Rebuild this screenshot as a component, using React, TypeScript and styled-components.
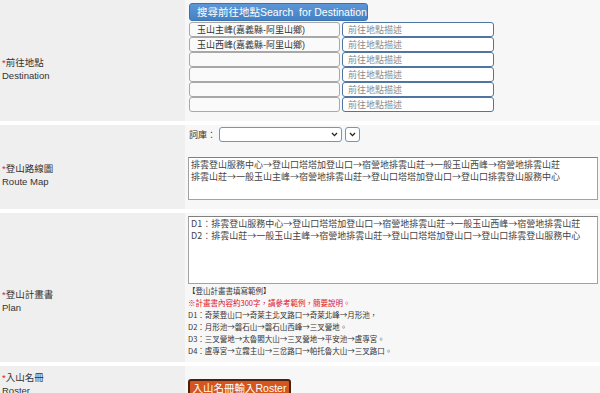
import React from 'react';
import styled, { createGlobalStyle } from 'styled-components';

const Global = createGlobalStyle`
  html, body { margin: 0; padding: 0; overflow: hidden; background: #fff; }
  body { font-family: "Liberation Sans", "Noto Sans CJK TC", sans-serif; color: #333; }
  * { box-sizing: border-box; }
`;

const Form = styled.div`
  display: flex;
  flex-direction: column;
  gap: 4px;
  width: 600px;
`;

const Row = styled.div`
  display: grid;
  grid-template-columns: 185px 1fr;
`;

const LabelCell = styled.div<{ $top?: boolean; $pt?: number }>`
  background: #efefef;
  display: flex;
  flex-direction: column;
  justify-content: ${(p) => (p.$top ? 'flex-start' : 'center')};
  padding: ${(p) => p.$pt ?? 16}px 0 0 2px;
  font-size: 9.5px;
  line-height: 13px;
  color: #333;
`;

const Req = styled.span`
  color: #e02424;
`;

const FieldCell = styled.div<{ $pt: number; $pb: number }>`
  background: #f7f7f7;
  padding: ${(p) => p.$pt}px 2px ${(p) => p.$pb}px 3px;
  display: flex;
  flex-direction: column;
  align-items: flex-start;
`;

const SearchButton = styled.button`
  margin-left: 1px;
  width: 179px;
  height: 18px;
  padding: 0 0 0 7px;
  text-align: left;
  background: linear-gradient(#5c96d6, #4482c5);
  border: 1px solid #3b71ae;
  border-radius: 3px;
  color: #fff;
  font-family: inherit;
  font-size: 10.5px;
  line-height: 16px;
  white-space: nowrap;
`;

const DestGrid = styled.div`
  margin: 1px 0 0 1px;
  display: grid;
  grid-template-columns: 151px 152px;
  column-gap: 2px;
`;

const NameInput = styled.input`
  height: 15px;
  width: 100%;
  border: 1px solid #a8a8a8;
  border-radius: 3px;
  background: #fafafa;
  padding: 0 0 0 7px;
  font-family: inherit;
  font-size: 9px;
  color: #333;
  outline: none;
`;

const DescInput = styled.input`
  height: 15px;
  width: 100%;
  border: 1px solid #4f76a3;
  border-radius: 3px;
  background: #fff;
  padding: 0 0 0 5px;
  font-family: inherit;
  font-size: 9px;
  color: #333;
  outline: none;
  &::placeholder { color: #8a8a8a; }
`;

const ThesaurusLine = styled.div`
  margin-left: 1px;
  display: flex;
  align-items: center;
  gap: 3px;
  font-size: 9px;
  color: #333;
`;

const SelectBox = styled.div<{ $w: number }>`
  width: ${(p) => p.$w}px;
  height: 15px;
  border: 1px solid #6f96c2;
  border-radius: 3px;
  background: #fff;
  display: flex;
  align-items: center;
  justify-content: flex-end;
  padding-right: 3px;
`;

const Chevron = () => (
  <svg width="7" height="5" viewBox="0 0 7 5">
    <path d="M1 1 L3.5 3.6 L6 1" fill="none" stroke="#222" strokeWidth="1.3" />
  </svg>
);

const Area = styled.textarea<{ $h: number; $mt: number }>`
  margin-top: ${(p) => p.$mt}px;
  width: 100%;
  height: ${(p) => p.$h}px;
  resize: none;
  border: 1px solid #a2a2a2;
  border-top-color: #808080;
  background: #fff;
  padding: 1px 2px;
  font-family: "Noto Sans CJK TC", "Liberation Sans", sans-serif;
  font-size: 9px;
  line-height: 11.5px;
  color: #444;
  overflow: hidden;
  outline: none;
`;

const Note = styled.div`
  margin-top: 1px;
  font-family: "Noto Sans CJK TC", "Liberation Sans", sans-serif;
  font-size: 7.5px;
  line-height: 12px;
  color: #333;
`;

const NoteLine = styled.div<{ $red?: boolean }>`
  color: ${(p) => (p.$red ? '#e0121e' : '#333')};
  white-space: nowrap;
`;

const RosterButton = styled.button`
  margin-top: 13px;
  width: 103px;
  height: 19px;
  padding: 0;
  background: #d2561d;
  border: 2px solid #4a2010;
  border-radius: 3px;
  color: #fff;
  font-family: inherit;
  font-size: 10.5px;
  line-height: 15px;
  white-space: nowrap;
`;

const destinations = ['玉山主峰(嘉義縣-阿里山鄉)', '玉山西峰(嘉義縣-阿里山鄉)', '', '', '', ''];

const routeText =
  '排雲登山服務中心→登山口塔塔加登山口→宿營地排雲山莊→一般玉山西峰→宿營地排雲山莊\n排雲山莊→一般玉山主峰→宿營地排雲山莊→登山口塔塔加登山口→登山口排雲登山服務中心';

const planText =
  'D1：排雲登山服務中心→登山口塔塔加登山口→宿營地排雲山莊→一般玉山西峰→宿營地排雲山莊\nD2：排雲山莊→一般玉山主峰→宿營地排雲山莊→登山口塔塔加登山口→登山口排雲登山服務中心';

const noteLines = [
  { t: '【登山計畫書填寫範例】' },
  { t: '※計畫書內容約300字，請參考範例，簡要說明。', red: true },
  { t: 'D1：奇萊登山口→奇萊主北叉路口→奇萊北峰→月形池，' },
  { t: 'D2：月形池→磐石山→磐石山西峰→三叉營地。' },
  { t: 'D3：三叉營地→太魯閣大山→三叉營地→平安池→盧專宮。' },
  { t: 'D4：盧專宮→立霧主山→三岔路口→帕托魯大山→三叉路口。' },
];

export default function App() {
  return (
    <>
      <Global />
      <Form>
        <Row>
          <LabelCell>
            <span><Req>*</Req>前往地點</span>
            <span>Destination</span>
          </LabelCell>
          <FieldCell $pt={3} $pb={9}>
            <SearchButton>搜尋前往地點Search{'\u00a0'} for Destination</SearchButton>
            <DestGrid>
              {destinations.map((d, i) => (
                <React.Fragment key={i}>
                  <NameInput readOnly defaultValue={d} />
                  <DescInput readOnly placeholder="前往地點描述" />
                </React.Fragment>
              ))}
            </DestGrid>
          </FieldCell>
        </Row>
        <Row>
          <LabelCell>
            <span><Req>*</Req>登山路線圖</span>
            <span>Route Map</span>
          </LabelCell>
          <FieldCell $pt={2} $pb={9}>
            <ThesaurusLine>
              <span>詞庫：</span>
              <SelectBox $w={123}><Chevron /></SelectBox>
              <SelectBox $w={15}><Chevron /></SelectBox>
            </ThesaurusLine>
            <Area readOnly $h={43} $mt={15} defaultValue={routeText} />
          </FieldCell>
        </Row>
        <Row>
          <LabelCell $pt={27}>
            <span><Req>*</Req>登山計畫書</span>
            <span>Plan</span>
          </LabelCell>
          <FieldCell $pt={3} $pb={5}>
            <Area readOnly $h={68} $mt={0} defaultValue={planText} />
            <Note>
              {noteLines.map((l, i) => (
                <NoteLine key={i} $red={l.red}>{l.t}</NoteLine>
              ))}
            </Note>
          </FieldCell>
        </Row>
        <Row>
          <LabelCell $top $pt={5}>
            <span><Req>*</Req>入山名冊</span>
            <span>Roster</span>
          </LabelCell>
          <FieldCell $pt={0} $pb={10}>
            <RosterButton>入山名冊輸入Roster</RosterButton>
          </FieldCell>
        </Row>
      </Form>
    </>
  );
}
